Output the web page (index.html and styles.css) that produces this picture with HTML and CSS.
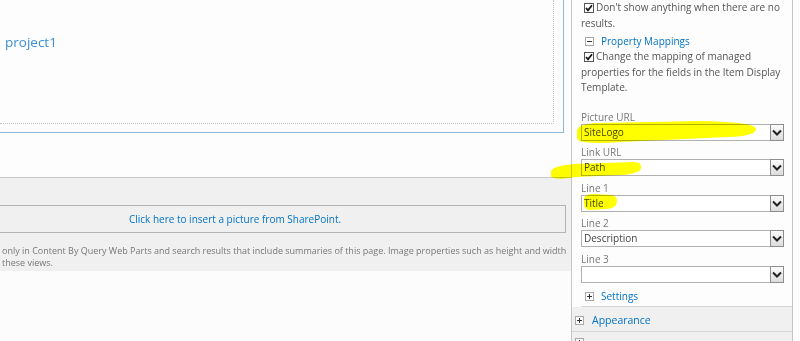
FILE: index.html
```html
<!DOCTYPE html>
<html lang="en">
<head>
    <meta charset="UTF-8">
    <meta name="viewport" content="width=device-width, initial-scale=1.0">
    <title>Edit Web Part</title>
    <link rel="stylesheet" href="styles.css">
</head>
<body>
    <div class="page">
        <div class="main">
            <div class="zone">
                <div class="zone-outer">
                    <div class="zone-inner">
                        <a class="item-link" href="#">project1</a>
                    </div>
                </div>
            </div>
            <div class="image-field">
                <div class="insert-box">
                    <a href="#">Click here to insert a picture from SharePoint.</a>
                </div>
                <p class="field-note">only in Content By Query Web Parts and search results that include summaries of this page. Image properties such as height and width<br>these views.</p>
            </div>
        </div>

        <div class="tool-pane">
            <div class="category-body">
                <p class="check-row">
                    <span class="checkbox"><svg width="8" height="8" viewBox="0 0 8 8"><path d="M1 4 L3 6.3 L7 1.2" /></svg></span>Don't show anything when there are no results.
                </p>
                <div class="sub-head">
                    <svg class="expander" width="9" height="9" viewBox="0 0 9 9"><rect x="0.5" y="0.5" width="8" height="8" /><path d="M2 4.5 H7" /></svg>
                    <a href="#">Property Mappings</a>
                </div>
                <p class="check-row">
                    <span class="checkbox"><svg width="8" height="8" viewBox="0 0 8 8"><path d="M1 4 L3 6.3 L7 1.2" /></svg></span>Change the mapping of managed properties for the fields in the Item Display Template.
                </p>

                <div class="fields">
                    <div class="field">
                        <label>Picture URL</label>
                        <div class="select"><span class="value">SiteLogo</span><span class="arrow"><svg width="10" height="7" viewBox="0 0 10 7"><path d="M1 1.5 L5 5.5 L9 1.5" /></svg></span></div>
                    </div>
                    <div class="field">
                        <label>Link URL</label>
                        <div class="select"><span class="value">Path</span><span class="arrow"><svg width="10" height="7" viewBox="0 0 10 7"><path d="M1 1.5 L5 5.5 L9 1.5" /></svg></span></div>
                    </div>
                    <div class="field">
                        <label>Line 1</label>
                        <div class="select"><span class="value">Title</span><span class="arrow"><svg width="10" height="7" viewBox="0 0 10 7"><path d="M1 1.5 L5 5.5 L9 1.5" /></svg></span></div>
                    </div>
                    <div class="field">
                        <label>Line 2</label>
                        <div class="select"><span class="value">Description</span><span class="arrow"><svg width="10" height="7" viewBox="0 0 10 7"><path d="M1 1.5 L5 5.5 L9 1.5" /></svg></span></div>
                    </div>
                    <div class="field">
                        <label>Line 3</label>
                        <div class="select"><span class="value"></span><span class="arrow"><svg width="10" height="7" viewBox="0 0 10 7"><path d="M1 1.5 L5 5.5 L9 1.5" /></svg></span></div>
                    </div>
                </div>

                <div class="sub-head">
                    <svg class="expander" width="9" height="9" viewBox="0 0 9 9"><rect x="0.5" y="0.5" width="8" height="8" /><path d="M2 4.5 H7 M4.5 2 V7" /></svg>
                    <a href="#">Settings</a>
                </div>
            </div>

            <div class="category">
                <svg class="expander" width="9" height="9" viewBox="0 0 9 9"><rect x="0.5" y="0.5" width="8" height="8" /><path d="M2 4.5 H7 M4.5 2 V7" /></svg>
                <a href="#">Appearance</a>
            </div>
            <div class="category category-peek">
                <svg class="expander" width="9" height="9" viewBox="0 0 9 9"><rect x="0.5" y="0.5" width="8" height="8" /><path d="M2 4.5 H7 M4.5 2 V7" /></svg>
            </div>
        </div>

        <!-- highlighter marks drawn over the screenshot -->
        <svg class="marker" width="800" height="341" viewBox="0 0 800 341">
            <path d="M577 131 Q577 124 598 123 L700 121 Q756 122 756 129 Q756 136 728 137 L620 142 Q578 145 577 138 Z" />
            <path d="M551 172 Q551 166 575 164 L634 162 Q642 162 641 168 Q640 174 620 175 L576 177 Q552 181 551 176 Z" />
            <path d="M584 199 Q584 194 595 194 L611 195 Q618 196 617 202 Q616 209 606 209 L591 210 Q584 210 584 204 Z" />
        </svg>
    </div>
</body>
</html>
```

FILE: styles.css
```css
* {
    margin: 0;
    padding: 0;
    box-sizing: border-box;
}

html,
body {
    width: 800px;
    height: 341px;
    overflow: hidden;
    background-color: #fcfcfc;
}

body {
    font-family: "Open Sans", "Noto Sans", Arial, sans-serif;
    color: #444;
}

a {
    color: #0072c6;
    text-decoration: none;
}

.page {
    position: relative;
    display: flex;
    height: 341px;
}

/* left: page content */

.main {
    width: 571px;
    flex-shrink: 0;
    overflow: hidden;
}

.zone {
    height: 178px;
    background-color: #fdfdfd;
    border-bottom: 1px solid #c8c8c8;
}

.zone-outer {
    width: 564px;
    height: 133px;
    padding: 0 9px 8px 0;
    border-right: 1px solid #8fb8dd;
    border-bottom: 1px solid #8fb8dd;
}

.zone-inner {
    height: 100%;
    padding: 30px 0 0 5px;
    border-right: 1px dotted #c4c4c4;
    border-bottom: 1px dotted #c4c4c4;
}

.item-link {
    font-size: 13.5px;
    line-height: 18px;
    color: #3a90d8;
}

.image-field {
    height: 93px;
    padding-top: 27px;
    background-color: #f0f0f0;
}

.insert-box {
    width: 662px;
    height: 28px;
    margin-left: -96px;
    border: 1px solid #b4b4b4;
    text-align: center;
    font-size: 10px;
    line-height: 26px;
}

.field-note {
    margin-top: 12px;
    padding-left: 2px;
    font-size: 9px;
    line-height: 12px;
    color: #777;
    white-space: nowrap;
}

/* right: tool pane */

.tool-pane {
    width: 222px;
    flex-shrink: 0;
    background-color: #fdfdfd;
    border-left: 1px solid #c6c6c6;
    border-right: 1px solid #c6c6c6;
}

.category-body {
    margin-left: 9px;
    padding: 0 8px 2px 0;
    border-bottom: 1px solid #d6d6d6;
    font-size: 10px;
}

.check-row {
    line-height: 15.5px;
    color: #555;
}

.checkbox {
    display: inline-flex;
    align-items: center;
    justify-content: center;
    width: 10px;
    height: 10px;
    margin: 0 2px 0 3px;
    vertical-align: -1px;
    border: 1px solid #555;
    background-color: #fff;
}

.checkbox path {
    fill: none;
    stroke: #111;
    stroke-width: 1.7;
}

.sub-head {
    display: flex;
    align-items: center;
    height: 16px;
    margin-top: 2px;
    padding-left: 4px;
    font-size: 10px;
}

.expander {
    flex-shrink: 0;
    margin-right: 7px;
}

.expander rect {
    fill: #fff;
    stroke: #a8a8a8;
}

.expander path {
    stroke: #333;
}

.fields {
    padding-top: 15px;
}

.field label {
    display: block;
    line-height: 13px;
    color: #777;
}

.select {
    display: flex;
    height: 17px;
    margin-bottom: 5.5px;
    border: 1px solid #b1b1b1;
    background-color: #fff;
}

.select .value {
    flex: 1;
    padding-left: 2px;
    font-size: 10px;
    line-height: 15px;
    color: #444;
}

.select .arrow {
    display: flex;
    align-items: center;
    justify-content: center;
    width: 14px;
    margin: -1px -1px -1px 0;
    border: 1px solid #8e8e8e;
    background: linear-gradient(#fbfbfb, #dcdcdc);
}

.select .arrow path {
    fill: none;
    stroke: #222;
    stroke-width: 2;
}

.category-body .sub-head:last-child {
    margin-top: 0;
}

.category {
    display: flex;
    align-items: center;
    height: 25px;
    padding: 2px 0 0 3px;
    background-color: #f0f0f0;
    border-bottom: 1px solid #d6d6d6;
    font-size: 10.5px;
}

.category .expander {
    margin-right: 8px;
}

.category-peek {
    align-items: flex-start;
    padding-top: 6px;
}

.marker {
    position: absolute;
    top: 0;
    left: 0;
    pointer-events: none;
    mix-blend-mode: multiply;
}

.marker path {
    fill: #ffff00;
}
```
